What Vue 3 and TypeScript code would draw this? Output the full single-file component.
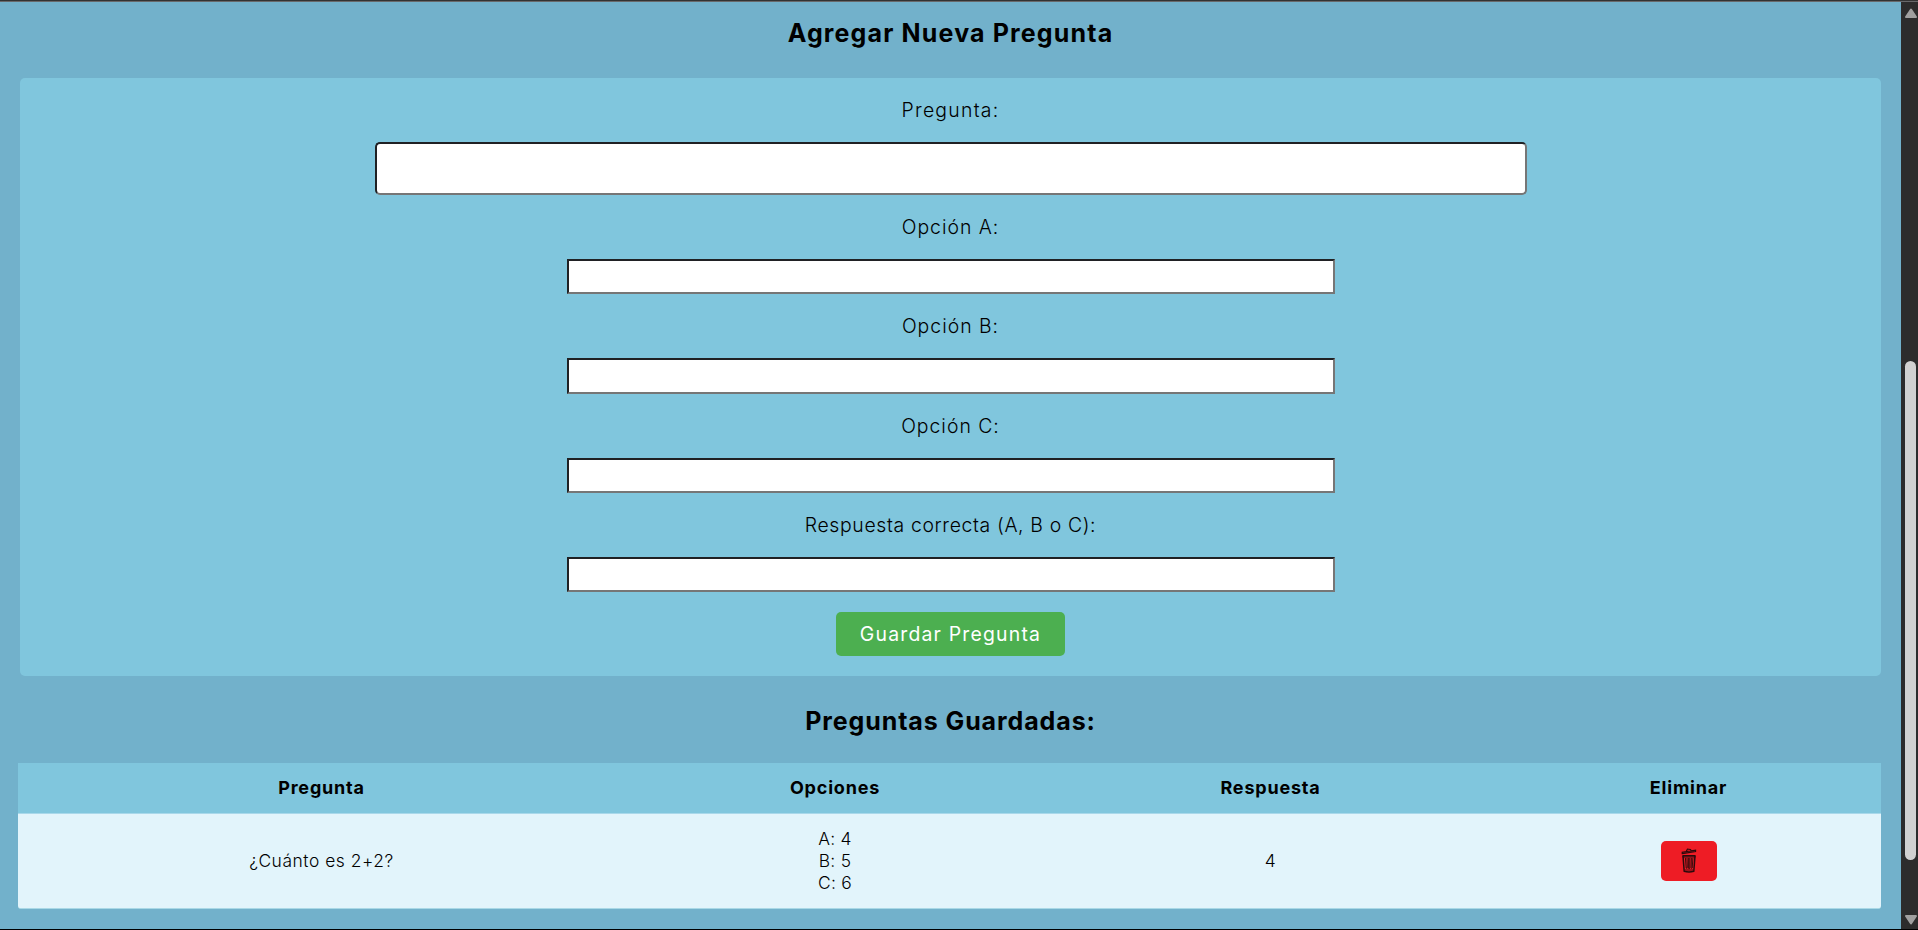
<script setup lang="ts">
import { ref } from 'vue'

interface Question {
  text: string
  options: string[]
  answer: string
}

const fields = ['Opción A:', 'Opción B:', 'Opción C:', 'Respuesta correcta (A, B o C):']
const questionText = ref('')
const values = ref<string[]>(['', '', '', ''])
const questions = ref<Question[]>([
  { text: '¿Cuánto es 2+2?', options: ['A: 4', 'B: 5', 'C: 6'], answer: '4' },
])

function removeQuestion(index: number): void {
  questions.value.splice(index, 1)
}
</script>

<template>
  <div class="window">
    <main class="page">
      <h2 class="title">Agregar Nueva Pregunta</h2>
      <form class="card" @submit.prevent>
        <label class="label first">Pregunta:</label>
        <input v-model="questionText" class="field wide" type="text" />
        <template v-for="(field, i) in fields" :key="field">
          <label class="label" :class="i === 3 ? 'long' : 'short'">{{ field }}</label>
          <input v-model="values[i]" class="field" type="text" />
        </template>
        <button class="save" type="submit">Guardar Pregunta</button>
      </form>
      <h2 class="title saved">Preguntas Guardadas:</h2>
      <table class="table">
        <colgroup>
          <col class="c1" />
          <col class="c2" />
          <col class="c3" />
          <col class="c4" />
        </colgroup>
        <thead>
          <tr>
            <th>Pregunta</th>
            <th>Opciones</th>
            <th>Respuesta</th>
            <th>Eliminar</th>
          </tr>
        </thead>
        <tbody>
          <tr v-for="(q, i) in questions" :key="q.text">
            <td>{{ q.text }}</td>
            <td><div v-for="o in q.options" :key="o" class="option">{{ o }}</div></td>
            <td>{{ q.answer }}</td>
            <td>
              <button class="remove" type="button" aria-label="Eliminar" @click="removeQuestion(i)">
                <svg width="16" height="25" viewBox="0 0 16 25" fill="none" stroke="#2a0a0c">
                  <path d="M1.2 5.6 L14.6 3.6 V2.2 L1.2 4.2 Z M5.2 3.4 L6.4 1 L9.4 1.4 L10.2 2.6" stroke-width="1.1" />
                  <path d="M1.4 7.6 H14.6 M1.6 9 H14.4" stroke-width="1.1" />
                  <path d="M2 8 L3.2 23.2 Q8 24.6 12.8 23.2 L14 8" stroke-width="1.5" />
                  <path d="M4.4 10 L5.2 20 Q6.2 21 6.3 19.6 L6 10 M7.6 10 V20.4 H8.8 V10 M11.9 10 L11.2 20 Q10.2 21 10.1 19.6 L10.4 10" stroke-width=".9" />
                  <path d="M4 22 H12" stroke-width=".8" />
                </svg>
              </button>
            </td>
          </tr>
        </tbody>
      </table>
    </main>
    <aside class="scrollbar">
      <svg class="arrow" width="14" height="11" viewBox="0 0 14 11"><path d="M7 1.5 L12 9 H2 Z" fill="#a0a0a0" stroke="#a0a0a0" stroke-width="2" stroke-linejoin="round" /></svg>
      <div class="thumb"></div>
      <svg class="arrow" width="14" height="11" viewBox="0 0 14 11"><path d="M7 9.5 L12 2 H2 Z" fill="#a0a0a0" stroke="#a0a0a0" stroke-width="2" stroke-linejoin="round" /></svg>
    </aside>
  </div>
</template>

<style>
body {
  margin: 0;
  overflow: hidden;
}
</style>

<style scoped>
.window {
  box-sizing: border-box;
  display: flex;
  width: 1918px;
  height: 930px;
  border-top: 1px solid #333;
  border-bottom: 1px solid #000;
  background: #72b1cb;
  color: #000;
  font-family: Inter, "Liberation Sans", sans-serif;
}
.page {
  box-sizing: border-box;
  width: 1901px;
  border-top: 1px solid #68696b;
}
.title {
  margin: 15px 0 0;
  height: 32px;
  line-height: 32px;
  font-size: 25px;
  font-weight: 700;
  letter-spacing: 1.15px;
  text-align: center;
}
.card {
  box-sizing: border-box;
  display: flex;
  flex-direction: column;
  align-items: center;
  height: 598px;
  margin: 29px 20px 0;
  border-radius: 5px;
  background: #80c6dd;
}
.label {
  height: 24px;
  margin: 20px 0;
  line-height: 24px;
  font-size: 19.4px;
  font-weight: 300;
  letter-spacing: 1.25px;
}
.label.short {
  letter-spacing: 1px;
}
.label.long {
  letter-spacing: 0.65px;
}
.field {
  box-sizing: border-box;
  width: 768px;
  height: 35.33px;
  flex: none;
  padding: 0 8px;
  border: 2px solid;
  border-color: #202124 #767676 #767676 #202124;
  background: #fff;
  font: 300 19px Inter, sans-serif;
}
.field.wide {
  width: 1152px;
  height: 53px;
  border-radius: 5px;
}
.save {
  width: 229px;
  height: 44px;
  margin-top: 20px;
  padding: 0;
  border: 0;
  border-radius: 5px;
  background: #4caf50;
  color: #fff;
  font: 400 19.4px Inter, sans-serif;
  letter-spacing: 1.2px;
}
.title.saved {
  margin-top: 29px;
  letter-spacing: 0.9px;
}
.table {
  width: 1863px;
  margin: 26px 0 0 18px;
  table-layout: fixed;
  border-spacing: 0;
  font-size: 17.4px;
  letter-spacing: 0.55px;
  text-align: center;
}
.c1 { width: 607px; }
.c2 { width: 420px; }
.c3 { width: 451px; }
.c4 { width: 385px; }
th {
  box-sizing: border-box;
  height: 51px;
  padding: 0 0 2px;
  border-bottom: 1px solid #a9d8ea;
  background: #80c6dd;
  font-size: 18px;
  font-weight: 700;
  letter-spacing: 0.8px;
}
td {
  box-sizing: border-box;
  height: 95px;
  padding: 0 0 1px;
  border-bottom: 1px solid #a9d8e6;
  background: #e2f4fb;
  font-weight: 300;
  vertical-align: middle;
}
td:first-child {
  border-bottom-left-radius: 3px;
}
td:last-child {
  border-bottom-right-radius: 3px;
}
.option {
  height: 22px;
  line-height: 22px;
  letter-spacing: 0.3px;
}
.remove {
  display: inline-flex;
  align-items: center;
  justify-content: center;
  width: 56px;
  height: 40px;
  padding: 0;
  border: 0;
  border-radius: 5px;
  background: #ee1c25;
  vertical-align: middle;
}
.scrollbar {
  box-sizing: border-box;
  display: flex;
  flex-direction: column;
  align-items: center;
  width: 17px;
  padding: 6px 0 0 2px;
  border-top: 1px solid #68696b;
  background: #2c2c2c;
}
.arrow {
  flex: none;
}
.thumb {
  width: 11px;
  height: 499px;
  margin-top: 342px;
  margin-bottom: 54px;
  border-radius: 6px;
  background: #d1d1d1;
}
</style>
